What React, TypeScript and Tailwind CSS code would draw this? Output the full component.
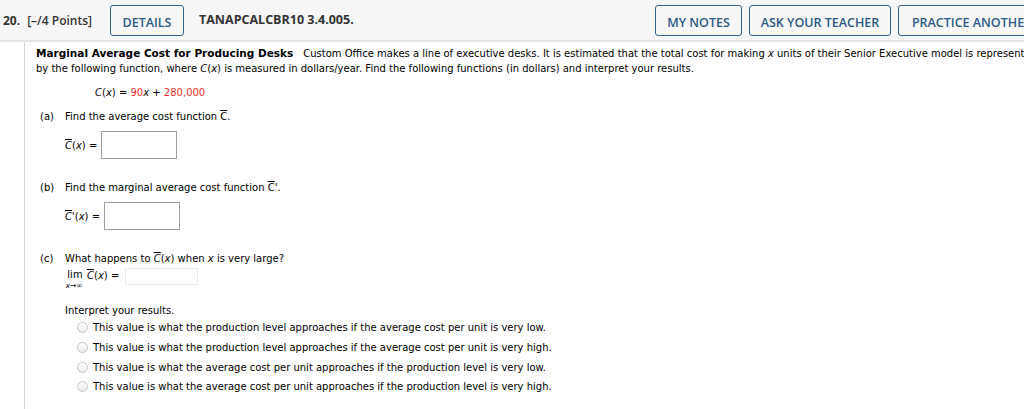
import React from "react";

const Cbar = () => <span className="overline">C</span>;

const Radio = () => (
  <span className="inline-block w-[11px] h-[11px] rounded-full border border-[#c4c4c4] bg-gradient-to-b from-white to-[#ececec] mr-[5px] shrink-0" />
);

const Btn = ({ children, w }: { children: React.ReactNode; w: string }) => (
  <div
    className={`h-[31px] ${w} border border-[#33628f] rounded-[3px] flex items-end justify-center pb-[2px] text-[#2c5a86] text-[12.5px] font-semibold shrink-0`}
  >
    {children}
  </div>
);

export default function App() {
  const opts = [
    "This value is what the production level approaches if the average cost per unit is very low.",
    "This value is what the production level approaches if the average cost per unit is very high.",
    "This value is what the average cost per unit approaches if the production level is very low.",
    "This value is what the average cost per unit approaches if the production level is very high.",
  ];
  return (
    <div className="w-[1024px] h-[409px] overflow-hidden bg-white">
      <div
        className="h-[42px] bg-[#f7f7f7] border-b-2 border-[#e4e4e4] flex items-start pt-[5px] whitespace-nowrap"
        style={{ fontFamily: '"Open Sans", sans-serif' }}
      >
        <div className="flex items-center h-[31px] text-[12px] font-bold text-[#333] pl-[3px]">
          <span>20.</span>
          <span className="ml-[7px] font-semibold">[–/4 Points]</span>
        </div>
        <div className="ml-[18px]">
          <Btn w="w-[74px]">DETAILS</Btn>
        </div>
        <div className="ml-[15px] flex items-center h-[31px] text-[12.5px] font-bold text-[#333]">
          TANAPCALCBR10 3.4.005.
        </div>
        <div className="ml-auto flex gap-[7px] -mr-[22px]">
          <Btn w="w-[87px]">MY NOTES</Btn>
          <Btn w="w-[142px]">ASK YOUR TEACHER</Btn>
          <Btn w="w-[148px]">PRACTICE ANOTHER</Btn>
        </div>
      </div>
      <div className="flex">
        <div className="w-[24px] shrink-0" />
        <div
          className="border-l border-[#d4d4d4] pl-[11px] pt-[4px] text-[10px] leading-[15px] text-black h-[367px] grow"
          style={{ fontFamily: '"DejaVu Sans", Verdana, sans-serif' }}
        >
          <div className="whitespace-nowrap">
            <span className="font-bold text-[10.5px]">Marginal Average Cost for Producing Desks</span>
            <span className="ml-[10px]">
              Custom Office makes a line of executive desks. It is estimated that the total cost for making <i>x</i> units of their Senior Executive model is represented
            </span>
          </div>
          <div>
            by the following function, where <i>C</i>(<i>x</i>) is measured in dollars/year. Find the following functions (in dollars) and interpret your results.
          </div>
          <div className="pl-[59px] mt-[9px]">
            <i>C</i>(<i>x</i>) = <span className="text-[#e8322b]">90</span><i>x</i> + <span className="text-[#e8322b]">280,000</span>
          </div>
          <div className="flex mt-[9px] pl-[4px]">
            <span className="w-[25px]">(a)</span>
            <span>
              Find the average cost function <Cbar />.
            </span>
          </div>
          <div className="flex items-center pl-[29px] mt-[7px]">
            <span>
              <i className="overline">C</i>(<i>x</i>) =
            </span>
            <div className="ml-[4px] w-[76px] h-[28px] border border-[#a0a0a0] bg-white" />
          </div>
          <div className="flex mt-[21px] pl-[4px]">
            <span className="w-[25px]">(b)</span>
            <span>
              Find the marginal average cost function <Cbar />'.
            </span>
          </div>
          <div className="flex items-center pl-[29px] mt-[7px]">
            <span>
              <i className="overline">C</i>'(<i>x</i>) =
            </span>
            <div className="ml-[4px] w-[76px] h-[28px] border border-[#a0a0a0] bg-white" />
          </div>
          <div className="flex mt-[21px] pl-[4px]">
            <span className="w-[25px]">(c)</span>
            <span>
              What happens to <i className="overline">C</i>(<i>x</i>) when <i>x</i> is very large?
            </span>
          </div>
          <div className="flex items-start pl-[27px] mt-[2px]">
            <div className="flex flex-col items-center w-[22px]">
              <span className="leading-[14px] pl-[2px]">lim</span>
              <span className="text-[7.5px] leading-[8px] italic">x→∞</span>
            </div>
            <span className="ml-[2px] leading-[14px] mt-[1px]">
              <i className="overline">C</i>(<i>x</i>) =
            </span>
            <div className="ml-[6px] w-[73px] h-[17px] border border-[#ececec] bg-white" />
          </div>
          <div className="pl-[29px] mt-[13px]">Interpret your results.</div>
          <div className="pl-[41px] flex flex-col">
            {opts.map((o) => (
              <div key={o} className="flex items-center h-[19.7px]">
                <Radio />
                <span>{o}</span>
              </div>
            ))}
          </div>
        </div>
      </div>
    </div>
  );
}
